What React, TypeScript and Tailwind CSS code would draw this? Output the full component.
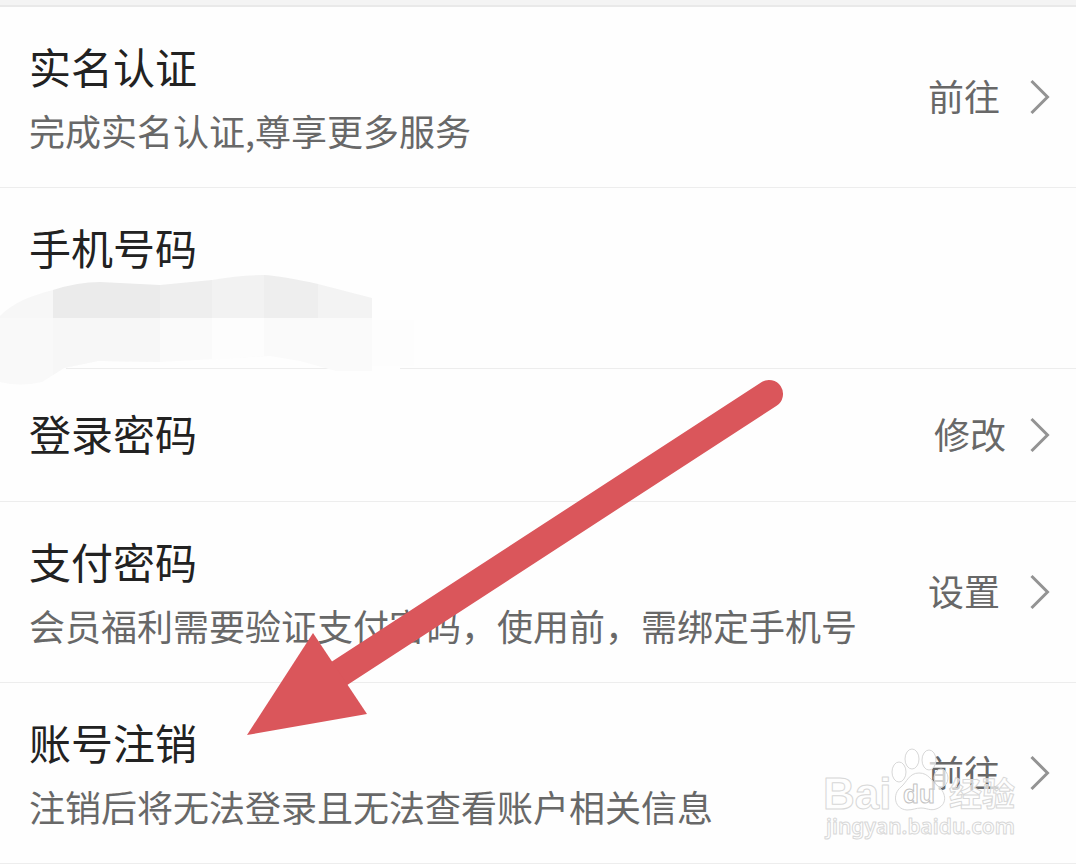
import { ReactNode } from 'react';

interface SettingItem {
  title: string;
  description?: string;
  action?: string;
  masked?: boolean;
}

const items: SettingItem[] = [
  { title: '实名认证', description: '完成实名认证,尊享更多服务', action: '前往' },
  { title: '手机号码', masked: true },
  { title: '登录密码', action: '修改' },
  {
    title: '支付密码',
    description: '会员福利需要验证支付密码，使用前，需绑定手机号',
    action: '设置',
  },
  { title: '账号注销', description: '注销后将无法登录且无法查看账户相关信息', action: '前往' },
];

function Chevron() {
  return (
    <svg
      className="w-5 h-9"
      viewBox="0 0 20 36"
      fill="none"
      stroke="#939393"
      strokeWidth="3"
      aria-hidden="true"
    >
      <path d="M1.5 2L17.5 18L1.5 34" />
    </svg>
  );
}

// Mosaic smear that hides the phone number, it bleeds over the row border
function MaskedNumber() {
  return (
    <div className="flex items-start h-16">
      <svg
        className="relative shrink-0 -mt-2 -ml-[29px]"
        width="416"
        height="117"
        viewBox="0 271 416 117"
        aria-hidden="true"
      >
        <path d="M0 360H66V370H0ZM336 360H400V372H336Z" fill="#fefefe" />
        <path d="M0 316C14 302 30 296 53 290V318H0Z" fill="#f7f7f7" />
        <path d="M0 318H53V375L42 382Q20 387 0 382Z" fill="#f9f9f9" />
        <path d="M53 318H372V371H336L300 361L270 356L160 362L98 361L64 368L53 375Z" fill="#fafafa" />
        <path d="M53 318H160V362L98 361L64 368L53 375Z" fill="#f7f7f7" />
        <path d="M212 318H264V356L212 360Z" fill="#fdfdfd" />
        <path d="M53 290Q78 282 100 282L160 285V318H53Z" fill="#ebebeb" />
        <path d="M160 285L212 280V318H160Z" fill="#eeeeee" />
        <path d="M212 280Q240 275 264 275V318H212Z" fill="#f2f2f2" />
        <path d="M264 275Q282 276 318 284V318H264Z" fill="#eeeeee" />
        <path d="M318 284L372 298V318H318Z" fill="#f3f3f3" />
        <path d="M372 320H414V366H372Z" fill="#fdfdfd" />
      </svg>
    </div>
  );
}

function SettingRow({ item }: { item: SettingItem }) {
  const tall = Boolean(item.description || item.masked);
  return (
    <li className="flex items-center justify-between border-b border-[#ededed] pl-[29px] pr-[26px]">
      <div className={tall ? 'pt-[27px] pb-[25px]' : 'pt-8 pb-9'}>
        <h2 className="text-[42px] leading-[64px] text-[#222222]">{item.title}</h2>
        {item.description && (
          <p className="text-[36px] leading-[64px] text-[#686868]">{item.description}</p>
        )}
        {item.masked && <MaskedNumber />}
      </div>
      {item.action && (
        <button
          type="button"
          className={`flex items-center text-[36px] leading-[52px] text-[#686868] ${
            item.action === '修改' ? 'gap-6' : 'gap-[30px]'
          }`}
        >
          <span className="pb-1">{item.action}</span>
          <Chevron />
        </button>
      )}
    </li>
  );
}

function Arrow() {
  return (
    <svg
      className="pointer-events-none absolute left-[240px] top-[370px]"
      width="560"
      height="375"
      viewBox="240 370 560 375"
      aria-hidden="true"
    >
      <path d="M320 686L769 394" stroke="#da565b" strokeWidth="28" strokeLinecap="round" />
      <path d="M247 735L313 633L367 714Z" fill="#da565b" />
    </svg>
  );
}

function Outlined({ children }: { children: ReactNode }) {
  return (
    <g
      fill="#ffffff"
      fillOpacity="0.7"
      stroke="#d8d8d8"
      strokeWidth="1"
      strokeLinejoin="round"
    >
      {children}
    </g>
  );
}

function Watermark() {
  return (
    <svg
      className="pointer-events-none absolute right-[52px] bottom-5"
      width="204"
      height="100"
      viewBox="820 744 204 100"
      aria-hidden="true"
    >
      <Outlined>
        <text x="823" y="809" fontSize="44" className="font-['Liberation_Sans',sans-serif] font-bold">
          Bai
        </text>
        <ellipse cx="899" cy="772" rx="7" ry="10" />
        <ellipse cx="912" cy="759" rx="7" ry="10" />
        <ellipse cx="929" cy="760" rx="7" ry="10" />
        <ellipse cx="941" cy="778" rx="7" ry="9" />
        <path d="M919 773C909 773 907 782 901 787C892 794 894 809 907 810C913 810 916 808 921 808C927 808 930 811 936 809C948 805 946 793 939 787C931 781 929 773 919 773Z" />
        <text
          x="903"
          y="803"
          fontSize="26"
          stroke="#c4c4c4"
          className="font-['Liberation_Sans',sans-serif] font-bold"
        >
          du
        </text>
        <text x="949" y="806" fontSize="33" className="font-['Noto_Sans_CJK_SC',sans-serif] font-bold">
          经验
        </text>
        <text x="826" y="834" fontSize="21" className="font-['Noto_Sans',sans-serif] font-semibold">
          jingyan.baidu.com
        </text>
      </Outlined>
    </svg>
  );
}

export default function App() {
  return (
    <main className="relative overflow-hidden bg-[#fefefe] font-['Noto_Sans_CJK_SC',sans-serif]">
      <div className="h-[7px] border-b-2 border-[#e9e9e9] bg-[#f4f4f4]" />
      <ul>
        {items.map((item) => (
          <SettingRow key={item.title} item={item} />
        ))}
      </ul>
      <Arrow />
      <Watermark />
    </main>
  );
}
